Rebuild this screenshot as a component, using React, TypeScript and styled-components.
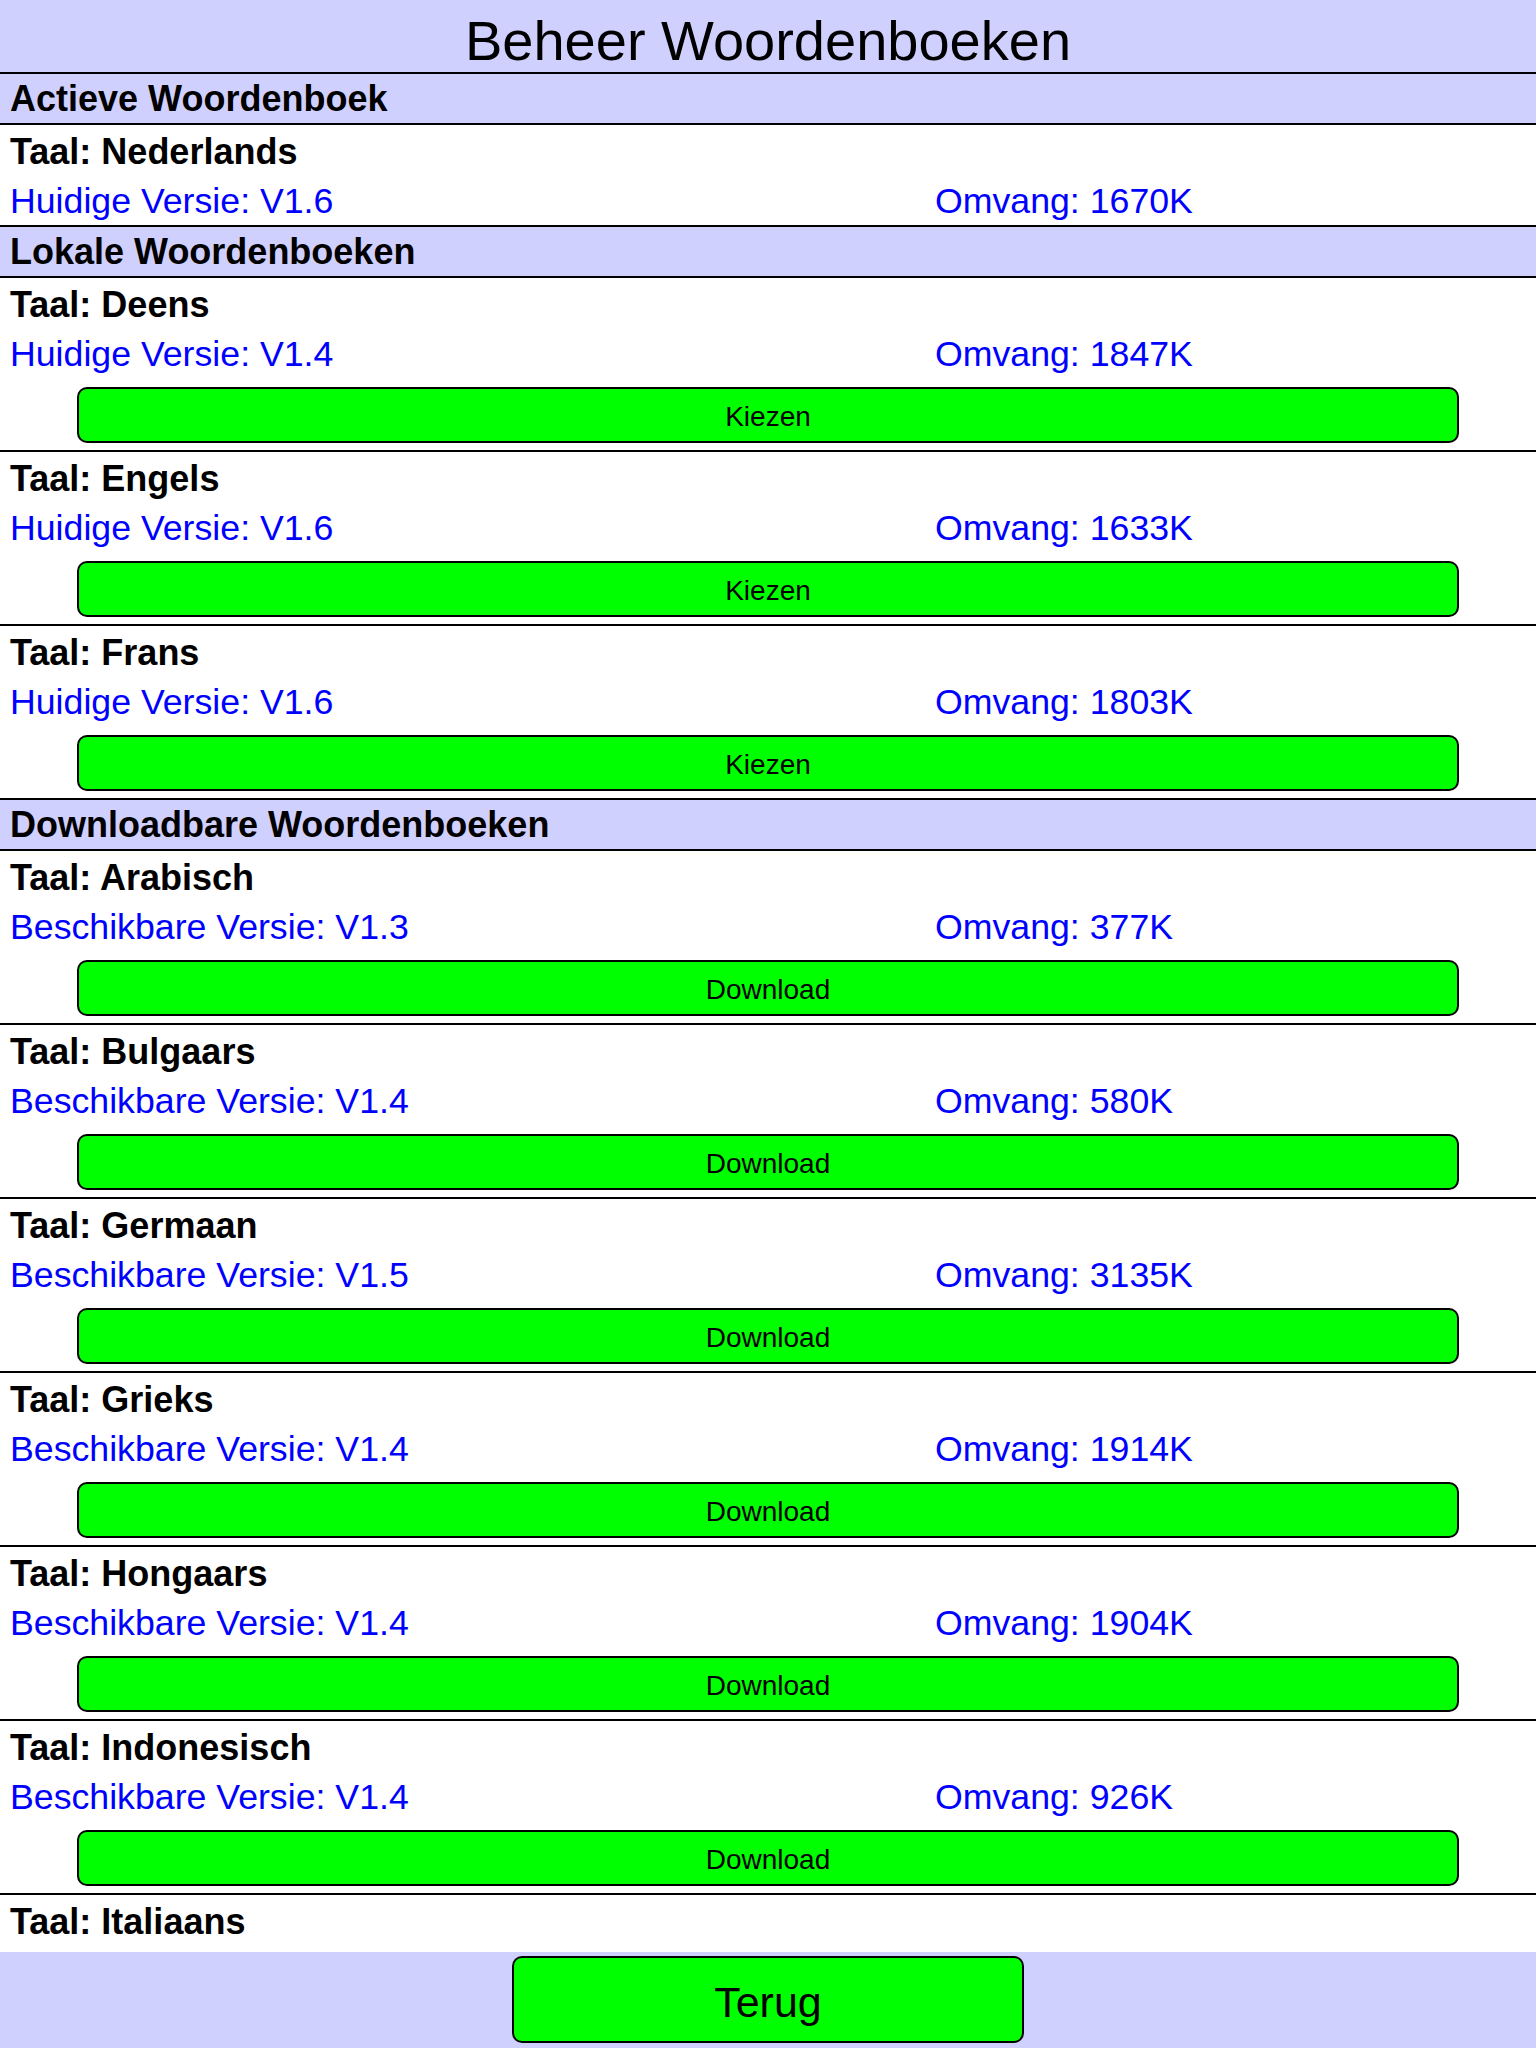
import React from "react";
import styled, { createGlobalStyle } from "styled-components";

const GlobalStyle = createGlobalStyle`
  html, body {
    margin: 0;
    padding: 0;
    background: #ffffff;
  }
  body {
    font-family: "Liberation Sans", Arial, Helvetica, sans-serif;
  }
  * { box-sizing: border-box; }
`;

const Page = styled.div`
  display: flex;
  flex-direction: column;
  height: 100vh;
  width: 100%;
  overflow: hidden;
  background: #ffffff;
`;

const Header = styled.header`
  flex: none;
  height: 74px;
  padding-top: 9px;
  background: #d0d0ff;
  border-bottom: 2px solid #000;
  text-align: center;
  font-size: 56px;
  line-height: 63px;
  color: #000;
`;

const ScrollArea = styled.main`
  flex: 1;
  overflow: hidden;
`;

const SectionHeader = styled.div`
  height: 51px;
  background: #d0d0ff;
  border-bottom: 2px solid #000;
  padding-left: 10px;
  font-size: 36px;
  font-weight: bold;
  line-height: 50px;
  color: #000;
`;

const Row = styled.div<{ $compact?: boolean }>`
  display: flex;
  flex-direction: column;
  height: ${(p) => (p.$compact ? "102px" : "174px")};
  padding-top: 2px;
  border-bottom: 2px solid #000;
  overflow: hidden;
`;

const Title = styled.div`
  padding-left: 10px;
  font-size: 36px;
  font-weight: bold;
  line-height: 50px;
  color: #000;
`;

const InfoLine = styled.div`
  display: grid;
  grid-template-columns: 925px 1fr;
  padding-left: 10px;
  font-size: 35.7px;
  line-height: 48px;
  color: #0000ff;
`;

const ActionButton = styled.button`
  display: block;
  margin: 9px 77px 0;
  height: 56px;
  background: #00ff00;
  border: 2px solid #000;
  border-radius: 10px;
  font-family: "Liberation Sans", Arial, Helvetica, sans-serif;
  font-size: 28px;
  line-height: 49px;
  padding: 3px 0 0;
  color: #000;
  cursor: pointer;
`;

const Footer = styled.footer`
  flex: none;
  height: 96px;
  background: #d0d0ff;
  display: flex;
  justify-content: center;
  align-items: flex-start;
  padding-top: 4px;
`;

const BackButton = styled.button`
  width: 512px;
  height: 87px;
  background: #00ff00;
  border: 2px solid #000;
  border-radius: 10px;
  font-family: "Liberation Sans", Arial, Helvetica, sans-serif;
  font-size: 43px;
  color: #000;
  padding: 5px 0 0;
  cursor: pointer;
`;

type Dict = { lang: string; version?: string; size?: string };

const active: Dict = { lang: "Nederlands", version: "V1.6", size: "1670K" };

const local: Dict[] = [
  { lang: "Deens", version: "V1.4", size: "1847K" },
  { lang: "Engels", version: "V1.6", size: "1633K" },
  { lang: "Frans", version: "V1.6", size: "1803K" },
];

const downloadable: Dict[] = [
  { lang: "Arabisch", version: "V1.3", size: "377K" },
  { lang: "Bulgaars", version: "V1.4", size: "580K" },
  { lang: "Germaan", version: "V1.5", size: "3135K" },
  { lang: "Grieks", version: "V1.4", size: "1914K" },
  { lang: "Hongaars", version: "V1.4", size: "1904K" },
  { lang: "Indonesisch", version: "V1.4", size: "926K" },
  { lang: "Italiaans" },
];

function DictRow({
  d,
  label,
  action,
}: {
  d: Dict;
  label: string;
  action?: string;
}) {
  return (
    <Row $compact={!action}>
      <Title>Taal: {d.lang}</Title>
      {d.version && (
        <InfoLine>
          <span>
            {label}: {d.version}
          </span>
          <span>Omvang: {d.size}</span>
        </InfoLine>
      )}
      {action && d.version && <ActionButton>{action}</ActionButton>}
    </Row>
  );
}

export default function App() {
  return (
    <>
      <GlobalStyle />
      <Page>
        <Header>Beheer Woordenboeken</Header>
        <ScrollArea>
          <SectionHeader>Actieve Woordenboek</SectionHeader>
          <DictRow d={active} label="Huidige Versie" />
          <SectionHeader>Lokale Woordenboeken</SectionHeader>
          {local.map((d) => (
            <DictRow key={d.lang} d={d} label="Huidige Versie" action="Kiezen" />
          ))}
          <SectionHeader>Downloadbare Woordenboeken</SectionHeader>
          {downloadable.map((d) => (
            <DictRow
              key={d.lang}
              d={d}
              label="Beschikbare Versie"
              action="Download"
            />
          ))}
        </ScrollArea>
        <Footer>
          <BackButton>Terug</BackButton>
        </Footer>
      </Page>
    </>
  );
}
